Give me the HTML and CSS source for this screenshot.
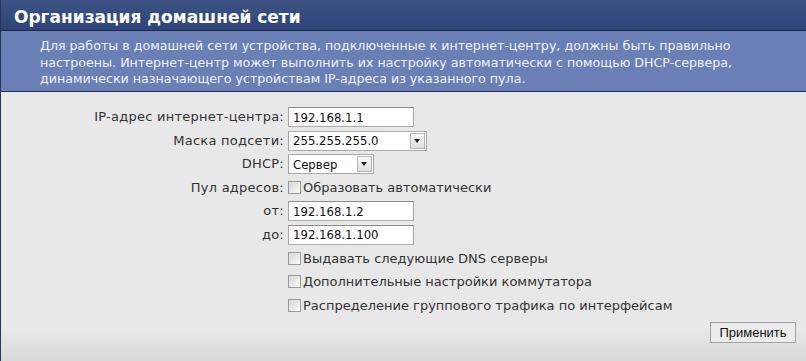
FILE: index.html
```html
<!DOCTYPE html>
<html lang="ru">
<head>
    <meta charset="UTF-8">
    <title>Организация домашней сети</title>
    <link rel="stylesheet" href="styles.css">
</head>
<body>

    <div class="panel">
        <h1 class="panel-title">Организация домашней сети</h1>
        <div class="panel-info">
            Для работы в домашней сети устройства, подключенные к интернет-центру, должны быть правильно
            настроены. Интернет-центр может выполнить их настройку автоматически с помощью DHCP-сервера,
            динамически назначающего устройствам IP-адреса из указанного пула.
        </div>

        <form class="panel-body">
            <div class="form-grid">
                <label class="form-label">IP-адрес интернет-центра:</label>
                <div class="form-field"><input class="text-input" type="text" value="192.168.1.1"></div>

                <label class="form-label">Маска подсети:</label>
                <div class="form-field">
                    <div class="fake-select mask-select">
                        <span class="select-value">255.255.255.0</span>
                        <span class="select-arrow"></span>
                    </div>
                </div>

                <label class="form-label">DHCP:</label>
                <div class="form-field">
                    <div class="fake-select dhcp-select">
                        <span class="select-value">Сервер</span>
                        <span class="select-arrow"></span>
                    </div>
                </div>

                <label class="form-label">Пул адресов:</label>
                <div class="form-field"><span class="check"></span>Образовать автоматически</div>

                <label class="form-label">от:</label>
                <div class="form-field"><input class="text-input" type="text" value="192.168.1.2"></div>

                <label class="form-label">до:</label>
                <div class="form-field"><input class="text-input" type="text" value="192.168.1.100"></div>

                <span></span>
                <div class="form-field"><span class="check"></span>Выдавать следующие DNS серверы</div>

                <span></span>
                <div class="form-field"><span class="check"></span>Дополнительные настройки коммутатора</div>

                <span></span>
                <div class="form-field"><span class="check"></span>Распределение группового трафика по интерфейсам</div>
            </div>

            <div class="form-actions">
                <button type="button" class="apply-btn">Применить</button>
            </div>
        </form>
    </div>

</body>
</html>
```

FILE: styles.css
```css
body {
    margin: 0;
    padding: 0;
    font-family: "DejaVu Sans", Verdana, sans-serif;
    font-size: 13px;
    background: #e7e7e7;
}
.panel {
    width: 806px;
    height: 361px;
    border-left: 1px solid #26375e;
    box-sizing: border-box;
    background: linear-gradient(to bottom, #e8e8e8 0, #e8e8e8 330px, #d9d9d9 361px);
}
.panel-title {
    margin: 0;
    height: 31px;
    padding: 0 0 0 13px;
    font-size: 17px;
    font-weight: bold;
    line-height: 34px;
    color: #fff;
    background: linear-gradient(to bottom, #3d5386 0, #2e4476 100%);
    border-bottom: 1px solid #1b2a4c;
    box-sizing: border-box;
}
.panel-info {
    padding: 7px 10px 0 39px;
    height: 61px;
    box-sizing: border-box;
    font-size: 12.65px;
    line-height: 16.5px;
    color: #eef1fa;
    background: #6a7fb5;
    border-bottom: 1px solid #1f2d50;
}
.panel-body {
    padding: 15px 0 0 0;
}
.form-grid {
    display: grid;
    grid-template-columns: 283px 1fr;
    column-gap: 4px;
    row-gap: 3px;
    color: #333;
}
.form-label {
    text-align: right;
    line-height: 20.5px;
    letter-spacing: 0.25px;
}
.form-field {
    display: flex;
    align-items: center;
    height: 20.5px;
}
.text-input {
    width: 126px;
    height: 20px;
    box-sizing: border-box;
    margin: 0;
    padding: 0 4px;
    border: 1px solid #a8a8a8;
    border-top-color: #8c8c8c;
    background: #fff;
    font-family: "DejaVu Sans Condensed", Tahoma, sans-serif;
    font-size: 13px;
    color: #111;
}
.fake-select {
    display: flex;
    align-items: center;
    height: 20px;
    box-sizing: border-box;
    border: 1px solid #a8a8a8;
    background: #fff;
    color: #111;
    font-family: "DejaVu Sans Condensed", Tahoma, sans-serif;
}
.mask-select {
    width: 139px;
}
.dhcp-select {
    width: 86px;
}
.select-value {
    flex: 1;
    padding-left: 4px;
}
.select-arrow {
    position: relative;
    width: 15px;
    height: 16px;
    margin-right: 1px;
    border: 1px solid #b5b5b5;
    box-sizing: border-box;
    background: linear-gradient(to bottom, #fafafa, #dedede);
}
.select-arrow::after {
    content: '';
    position: absolute;
    left: 3px;
    top: 5px;
    border-left: 3.5px solid transparent;
    border-right: 3.5px solid transparent;
    border-top: 4px solid #222;
}
.check {
    display: inline-block;
    width: 11px;
    height: 11px;
    margin: 0 2px 0 0;
    border: 1px solid #9a9a9a;
    background: linear-gradient(135deg, #d6d6d6, #fbfbfb);
}
.form-actions {
    display: flex;
    justify-content: flex-end;
    padding: 6px 10px 0 0;
}
.apply-btn {
    width: 86px;
    height: 21px;
    padding: 0;
    font-family: "Liberation Sans", Arial, sans-serif;
    font-size: 13px;
    color: #111;
    background: #ececec;
    border: 1px solid #a3a3a3;
}
```
